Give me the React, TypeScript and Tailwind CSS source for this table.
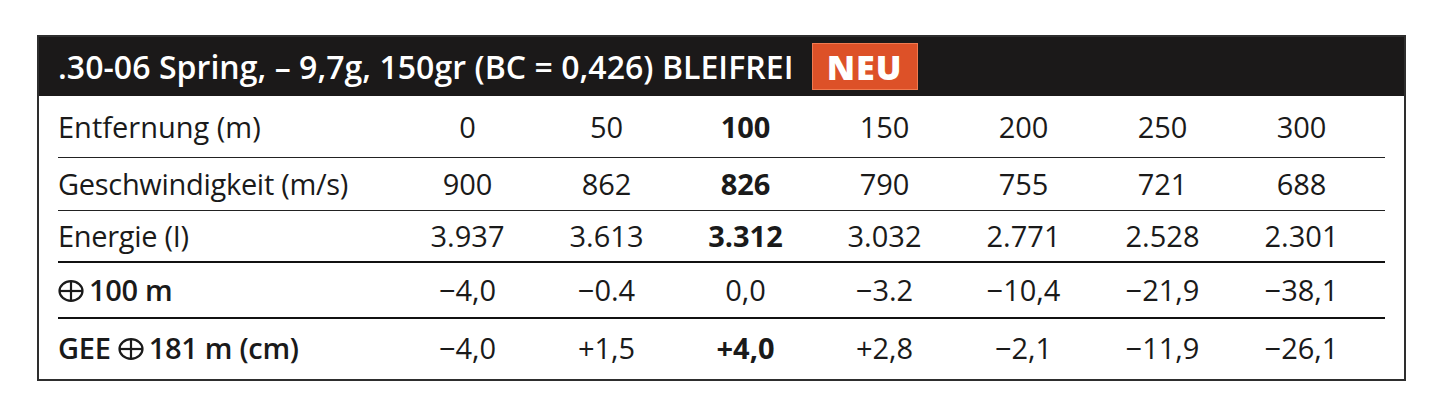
import React from "react";

const cols = ["0", "50", "100", "150", "200", "250", "300"];

const rows = [
  {
    label: "Geschwindigkeit (m/s)",
    weight: "font-medium",
    values: ["900", "862", "826", "790", "755", "721", "688"],
    bold: [2],
  },
  {
    label: "Energie (I)",
    weight: "font-medium",
    values: ["3.937", "3.613", "3.312", "3.032", "2.771", "2.528", "2.301"],
    bold: [2],
  },
  {
    label: "⊕100 m",
    weight: "font-semibold",
    values: ["−4,0", "−0.4", "0,0", "−3.2", "−10,4", "−21,9", "−38,1"],
    bold: [],
  },
  {
    label: "GEE ⊕181 m (cm)",
    weight: "font-semibold",
    values: ["−4,0", "+1,5", "+4,0", "+2,8", "−2,1", "−11,9", "−26,1"],
    bold: [2],
  },
];

// circled plus (zero-point symbol)
const Crosshair = () => (
  <svg
    width="26"
    height="22"
    viewBox="0 0 26 22"
    className="inline-block align-[-1px] mr-[5px]"
    fill="none"
    stroke="#1a1a1a"
    strokeWidth="2.2"
  >
    <ellipse cx="13" cy="11" rx="11.5" ry="9.8" />
    <line x1="1.5" y1="11" x2="24.5" y2="11" />
    <line x1="13" y1="1.2" x2="13" y2="20.8" />
  </svg>
);

const Label = ({ text }: { text: string }) => {
  const parts = text.split("⊕");
  if (parts.length === 1) return <>{text}</>;
  return (
    <>
      {parts[0]}
      <Crosshair />
      {parts[1]}
    </>
  );
};

const App = () => {
  return (
    <div className="w-[1444px] h-[400px] bg-white pt-[35px] pl-[37px] font-['Open_Sans',sans-serif] text-[#1a1a1a]">
      <div className="w-[1369px] h-[346px] border-2 border-[#2e2e2e]">
        <div className="h-[59px] bg-[#1b1919] flex items-center pl-[19px] gap-[18px]">
          <span className="text-white text-[32px] font-semibold tracking-[0.05px] leading-none">
            .30-06 Spring, – 9,7g, 150gr (BC = 0,426) BLEIFREI
          </span>
          <span className="h-[47px] w-[106px] justify-center bg-[#dd5128] border border-[#f07a50] text-white text-[34px] font-extrabold tracking-[1px] flex items-center leading-none">
            NEU
          </span>
        </div>
        <div className="px-[19px]">
          <div className="grid grid-cols-[340px_repeat(7,139px)] h-[62px] items-center border-b-[1.5px] border-[#222] text-[29px]">
            <div>Entfernung (m)</div>
            {cols.map((c, i) => (
              <div key={c} className={`text-center ${i === 2 ? "font-bold" : ""}`}>
                {c}
              </div>
            ))}
          </div>
          {rows.map((r, ri) => (
            <div
              key={r.label}
              className={`grid grid-cols-[340px_repeat(7,139px)] items-center text-[29px] ${
                ri === 0 ? "h-[53px] border-b-[1.5px] border-[#222]" : ""
              }${ri === 1 ? "h-[52px] border-b-2 border-[#111]" : ""}${
                ri === 2 ? "h-[56px] border-b-2 border-[#111]" : ""
              }${ri === 3 ? "h-[58px]" : ""}`}
            >
              <div className={`${r.weight} tracking-[-0.3px]`}>
                <Label text={r.label} />
              </div>
              {r.values.map((v, i) => (
                <div
                  key={i}
                  className={`text-center ${r.bold.includes(i) ? "font-bold" : ""}`}
                >
                  {v}
                </div>
              ))}
            </div>
          ))}
        </div>
      </div>
    </div>
  );
};

export default App;
